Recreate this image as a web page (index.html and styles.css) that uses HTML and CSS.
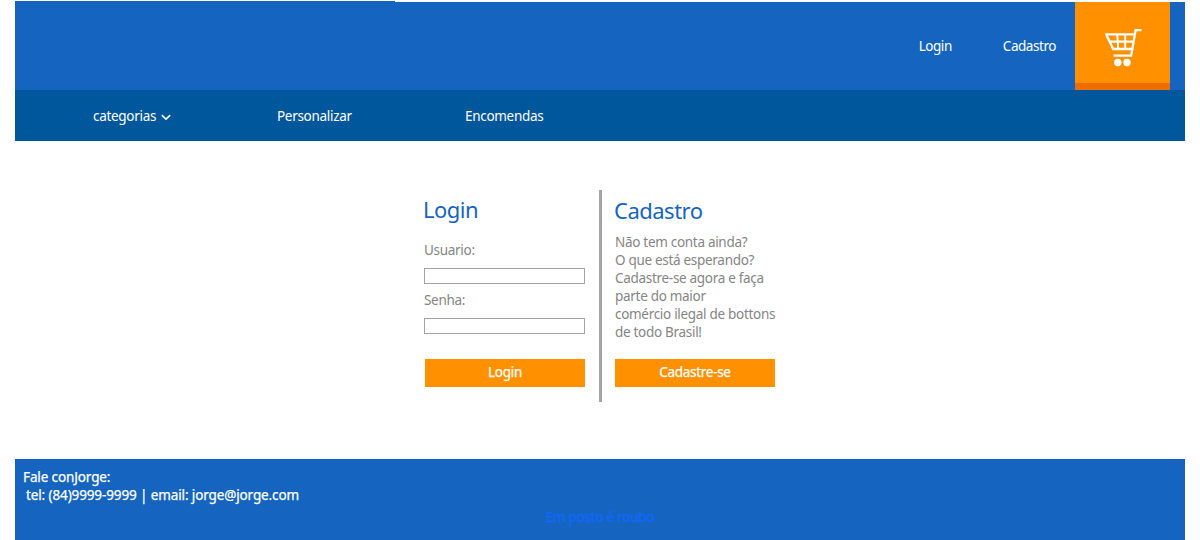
FILE: index.html
```
<!DOCTYPE html>
<html lang="pt-BR">
<head>
<meta charset="utf-8">
<title>Login</title>
<link rel="stylesheet" href="styles.css">
</head>
<body>
<div class="page">
  <div class="accent"></div>
  <header class="topbar">
    <a class="top-login">Login</a>
    <a class="top-signup">Cadastro</a>
    <a class="cart" aria-label="Carrinho">
      <svg width="40" height="42" viewBox="0 0 40 42" fill="none" stroke="#fff" stroke-width="2.3">
        <path d="M37.5 2.2H31.6L27.2 27.7H9.6"/>
        <path d="M1.2 6.4H30.6M2.2 6.4L9.2 21H28.2M5.2 13.6H29.4"/>
        <path d="M13.2 6.4L14.2 21M21.2 6.4V21" stroke-width="2"/>
        <g fill="#fff" stroke="none"><circle cx="13.8" cy="34.5" r="3.7"/><circle cx="23" cy="34.5" r="3.7"/></g>
      </svg>
    </a>
  </header>
  <nav class="menu">
    <a class="menu-categories">categorias
      <svg width="10" height="7" viewBox="0 0 10 7" fill="none" stroke="#fff" stroke-width="1.6"><path d="M.8 1.2L5 5.2L9.2 1.2"/></svg>
    </a>
    <a class="menu-custom">Personalizar</a>
    <a class="menu-orders">Encomendas</a>
  </nav>
  <main class="content">
    <form class="login">
      <h2 class="title">Login</h2>
      <label class="label" for="user">Usuario:</label>
      <input class="field" id="user" type="text">
      <label class="label" for="pass">Senha:</label>
      <input class="field" id="pass" type="password">
      <button class="button" type="button">Login</button>
    </form>
    <section class="signup">
      <h2 class="title">Cadastro</h2>
      <p class="text">Não tem conta ainda?<br>O que está esperando?<br>Cadastre-se agora e faça<br>parte do maior<br>comércio ilegal de bottons<br>de todo Brasil!</p>
      <button class="button" type="button">Cadastre-se</button>
    </section>
  </main>
  <footer class="footer">
    <p class="contact">Fale conJorge:</p>
    <p class="contact contact-line">tel: (84)9999-9999 | email: jorge@jorge.com</p>
    <p class="slogan">Em posto é roubo</p>
  </footer>
</div>
</body>
</html>
```
FILE: styles.css
```
* { box-sizing: border-box; }
body { margin: 0; background: #fff; font: 13.5px/18px "Noto Sans", "Open Sans", sans-serif; letter-spacing: -.3px; overflow: hidden; }
h2, p { margin: 0; font-weight: 400; }
.page { width: 1170px; height: 540px; margin: 0 auto; padding-top: 1px; display: flex; flex-direction: column; }
.accent { width: 380px; height: 1px; background: #1565c0; }
.topbar { height: 88px; padding-right: 15px; background: #1565c0; color: #fff; display: flex; justify-content: flex-end; letter-spacing: -.45px; }
.top-login, .top-signup { padding-top: 35px; }
.top-login { margin-right: 51px; }
.top-signup { margin-right: 19px; }
.cart { width: 95px; height: 88px; padding: 26px 0 0 29px; background: #ff9000; border-bottom: 7px solid #ef6c00; }
.cart svg { display: block; }
.menu { height: 51px; padding: 17px 0 0 78px; background: #01579b; color: #fff; display: flex; }
.menu-categories { width: 184px; display: flex; gap: 5px; }
.menu-categories svg { margin-top: 7px; }
.menu-custom { width: 188px; }
.content { height: 318px; padding: 49px 0 0 409px; display: flex; align-items: flex-start; color: #858585; }
.login { width: 175px; height: 212px; padding-top: 6px; }
.title { height: 26px; font-size: 22px; line-height: 26px; letter-spacing: -.5px; color: #1565c0; margin-left: -1px; }
.label { display: block; height: 18px; }
.login .title { margin-bottom: 19px; }
.field { display: block; width: 161px; height: 16px; margin: 9px 0 7px; padding: 0 2px; border: 1px solid #a3a3a3; background: #fff; font: inherit; font-size: 12px; }
.button { display: block; width: 160px; height: 28px; padding: 0 0 2px; border: 0; background: #ff9000; color: #fff; font: inherit; letter-spacing: -.3px; -webkit-text-stroke: .25px #fff; }
.login .button { margin: 25px 0 0 1px; }
.signup { width: 190px; height: 212px; padding: 7px 0 0 13px; border-left: 3px solid #a3a3a3; }
.signup .title { margin-bottom: 10px; }
.signup .button { margin-top: 18px; }
.footer { flex: 1; padding-top: 9px; background: #1565c0; color: #fff; letter-spacing: -.12px; }
.contact { padding-left: 8px; -webkit-text-stroke: .25px #fff; }
.contact-line { padding-left: 11px; }
.slogan { margin-top: 4px; text-align: center; color: #1167ff; letter-spacing: -.25px; -webkit-text-stroke: .25px #1167ff; }
```
